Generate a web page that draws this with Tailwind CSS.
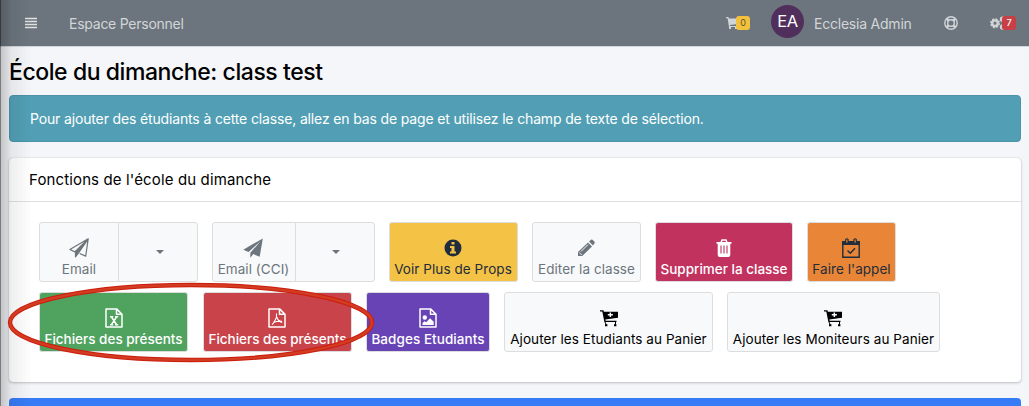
<!DOCTYPE html>
<html lang="fr">
<head>
<meta charset="utf-8">
<title>École du dimanche</title>
<script src="https://cdn.jsdelivr.net/npm/@tailwindcss/browser@4"></script>
</head>
<body class="relative w-[1029px] h-[406px] overflow-hidden bg-[#f4f6f9] font-['Inter','Liberation_Sans',sans-serif] text-black">
<svg class="hidden">
  <symbol id="cartplus" viewBox="0 0 20 18"><path fill="currentColor" d="M1 1.2h3.400l.5 1.500H19v6.100L6.300 10.600l.4 1.200H17.500v1.200H5.400L3.300 2.500H1zM6 15.200h2.400v2H6zM15 15.200h2.400v2H15zM5.500 13l1 2.200h1L6.500 13zM16 13h1v2.500h-1z"/><path fill="#f8f9fa" d="M10.600 3.600h1.500v1.500h1.800v1.300h-1.800v1.500h-1.500V6.400H8.800V5.100h1.800z"/></symbol>
  <symbol id="file" viewBox="0 0 18 20"><path fill="none" stroke="currentColor" stroke-width="1.500" stroke-linejoin="round" d="M1 .9h10.600L17 6.200v12.900H1zM11.500 1v5.300H17"/></symbol>
</svg>

<header class="flex items-center h-[47px] bg-[#6c757d] border-b border-[#d3d7dc] text-[#d2d5d8] text-[14px]">
  <svg class="ml-[25px] w-3 h-3" viewBox="0 0 12 12"><path stroke="#e0e2e4" stroke-width="1.700" d="M0 1.500h12M0 4.500h12M0 7.500h12M0 10.500h12"/></svg>
  <span class="ml-8 w-[116px] whitespace-nowrap tracking-[-0.250px]">Espace Personnel</span>
  <div class="ml-[541px] w-6 h-4 flex items-center">
    <svg class="w-3 h-3 shrink-0" viewBox="0 0 12 12"><path fill="currentColor" d="M0 0h2.400l.5 1.500H12V7L4 8v1h7v1H3L1.600 1.200H0zM3 10h2v2H3zM9 10h2v2H9z"/></svg>
    <span class="-ml-[2px] w-[14px] h-[14px] shrink-0 rounded-[3px] bg-[#f4c13d] text-[#5d5330] text-[9px] leading-[14px] text-center">0</span>
  </div>
  <span class="ml-[21px] -mt-1 w-[33px] h-[33px] rounded-full bg-[#502f5c] text-white text-[16.500px] leading-[33px] text-center tracking-[-0.500px]">EA</span>
  <span class="ml-[10px] w-[98px] whitespace-nowrap tracking-[-0.220px]">Ecclesia Admin</span>
  <svg class="ml-8 w-[14px] h-[14px]" viewBox="0 0 14 14" fill="none" stroke="currentColor"><circle cx="7" cy="7" r="6.200" stroke-width="1.400"/><circle cx="7" cy="7" r="3.300" stroke-width="1.400"/><path stroke-width="2.500" d="M2.700 2.700l1.900 1.900M11.300 2.700L9.400 4.600M2.700 11.300l1.900-1.900M11.300 11.300L9.400 9.400"/></svg>
  <div class="ml-8 w-[26px] flex items-center">
    <svg class="w-[14px] h-[14px] shrink-0" viewBox="0 0 14 14" fill="none" stroke="currentColor"><circle cx="5" cy="7.200" r="2.800" stroke-width="2.300"/><circle cx="5" cy="7.200" r="4.300" stroke-width="1.500" stroke-dasharray="1.900 1.477"/><circle cx="12.500" cy="3.200" r="1.700" stroke-width="2"/><circle cx="12.500" cy="11" r="1.700" stroke-width="2"/></svg>
    <span class="-ml-[2px] w-[14px] h-[14px] shrink-0 rounded-[3px] bg-[#c93f46] text-white text-[9px] font-medium leading-[14px] text-center">7</span>
  </div>
</header>

<main class="pl-[9px] pr-2">
  <h1 class="h-[48px] pt-2 text-[23px] leading-[34px] font-medium tracking-[-0.430px] whitespace-nowrap">École du dimanche: class test</h1>
  <div class="h-[47px] rounded-[4px] bg-[#529fb5] border border-[#4a93a8] pl-5 text-white text-[14px] leading-[46px] tracking-[-0.150px] whitespace-nowrap">Pour ajouter des étudiants à cette classe, allez en bas de page et utilisez le champ de texte de sélection.</div>

  <section class="mt-4 h-[224px] rounded-[4px] bg-white shadow-[0_0_1px_rgba(0,0,0,0.250),0_1px_3px_rgba(0,0,0,0.220)]">
    <h2 class="h-[44px] border-b border-[#dfdfdf] pl-5 text-[15px] leading-[44px] tracking-[0.130px] whitespace-nowrap">Fonctions de l'école du dimanche</h2>
    <div class="pl-[30px] pt-5 flex flex-col gap-[10px] text-[13.500px] leading-4 whitespace-nowrap">
      <div class="flex h-[60px] text-[#6c757d] tracking-[0.060px]">
        <div class="flex w-[159px] rounded-[3px] border border-[#dddddd] bg-[#f8f9fa]">
          <div class="w-[79px] border-r border-[#dddddd] flex flex-col items-center pt-[15px]">
            <svg class="w-5 h-5 mb-[3px]" viewBox="0 0 20 20"><path fill="none" stroke="currentColor" stroke-width="1.200" stroke-linejoin="round" d="M19.200.8L.9 11.500l5 2.400L19.200.8l-2.500 17.300-6-2.600M19.200.8L6.500 14v4.800l3-4z"/><path fill="currentColor" d="M18.500 2L6 14v5.400l3.500-4.500z"/></svg><span>Email</span>
          </div>
          <div class="flex-1 grid place-items-center"><svg class="w-2 h-1 ml-1" viewBox="0 0 8 4"><path fill="currentColor" d="M0 0h8L4 4z"/></svg></div>
        </div>
        <div class="ml-[14px] flex w-[163px] rounded-[3px] border border-[#dddddd] bg-[#f8f9fa]">
          <div class="w-[83px] border-r border-[#dddddd] flex flex-col items-center pt-[15px]">
            <svg class="w-5 h-5 mb-[3px] mr-0.5" viewBox="0 0 20 20"><path fill="currentColor" d="M19.800.4L.3 11.700l5.200 2.200L17.500 3.300 7.300 14.800v5l3-3.700 6.400 2.600z"/></svg><span class="mr-px">Email (CCI)</span>
          </div>
          <div class="flex-1 grid place-items-center"><svg class="w-2 h-1 ml-0.5" viewBox="0 0 8 4"><path fill="currentColor" d="M0 0h8L4 4z"/></svg></div>
        </div>
        <div class="ml-[14px] w-[129px] rounded-[3px] border border-[#dddddd] bg-[#f4c244] text-[#1f2d3d] flex flex-col items-center pt-4">
          <svg class="w-[18px] h-[18px] mb-1 mr-0.5" viewBox="0 0 18 18"><circle cx="9" cy="9" r="8.500" fill="currentColor"/><path fill="#f4c244" d="M7.500 3h3v2.500h-3zM6 7h4.500v5.500H12v2H6v-2h1.500V9H6z"/></svg><span class="mr-px">Voir Plus de Props</span>
        </div>
        <div class="ml-[14px] w-[109px] rounded-[3px] border border-[#dddddd] bg-[#f8f9fa] flex flex-col items-center pt-4">
          <svg class="w-[18px] h-[18px] mb-1 mr-0.5" viewBox="0 0 18 18"><path fill="currentColor" d="M11 3.500L15 7.500 5.200 17H1v-4zM12 2.500L14 .7q.8-.6 1.500 0l2 2q.6.8 0 1.500L16 6.500z"/><path stroke="#f8f9fa" fill="none" d="M4 12.500l7-7M2.200 13.500l2.500 2.500"/></svg><span>Editer la classe</span>
        </div>
        <div class="ml-[14px] w-[138px] rounded-[3px] border border-[#dddddd] bg-[#c1325f] text-white font-medium tracking-normal flex flex-col items-center pt-4">
          <svg class="w-[18px] h-[18px] mb-1" viewBox="0 0 18 18"><path fill="none" stroke="currentColor" stroke-width="1.500" d="M6 3.500L7 1h4l1 2.500"/><path fill="currentColor" d="M1.500 3h15v1.700h-1.200V16q-.2 2-1.800 2h-9q-1.600 0-1.800-2V4.700H1.500z"/><path stroke="#c1325f" stroke-width="1.100" d="M6 6.500v8M9 6.500v8M12 6.500v8"/></svg><span>Supprimer la classe</span>
        </div>
        <div class="ml-[14px] w-[89px] rounded-[3px] border border-[#dddddd] bg-[#e98536] text-[#1f2d3d] flex flex-col items-center pt-[15px]">
          <svg class="w-[18px] h-5 mb-[3px] mr-0.5" viewBox="0 0 18 20"><path fill="none" stroke="currentColor" stroke-width="1.400" d="M.8 4h16.400v15.200H.8zM5.500 12.500l2.800 2.700 4.700-5"/><path fill="currentColor" d="M.2 3h17.600v4H.2z"/><path fill="#e98536" stroke="currentColor" stroke-width="1.200" d="M3.700 1.500q1.200-1.500 2.400 0v3q-1.200 1.500-2.400 0zM11.900 1.500q1.200-1.500 2.400 0v3q-1.200 1.500-2.400 0z"/></svg><span>Faire l'appel</span>
        </div>
      </div>
      <div class="flex h-[60px] text-white font-medium">
        <div class="w-[149px] rounded-[3px] border border-[#dddddd] bg-[#4fa35f] flex flex-col items-center pt-[15px]">
          <div class="grid mb-[3px]"><svg class="w-[18px] h-5 [grid-area:1/1]"><use href="#file"/></svg><svg class="w-[18px] h-5 [grid-area:1/1]" viewBox="0 0 18 20"><path fill="none" stroke="currentColor" stroke-width="1.400" d="M6.500 9l5 7.500M11.500 9l-5 7.500M5 8.700h3.200M10 8.700h3.200M5 16.700h3.200M10 16.700h3.200"/></svg></div><span>Fichiers des présents</span>
        </div>
        <div class="ml-[15px] w-[149px] rounded-[3px] border border-[#dddddd] bg-[#c9434b] flex flex-col items-center pt-[15px]">
          <div class="grid mb-[3px] mr-0.5"><svg class="w-[18px] h-5 [grid-area:1/1]"><use href="#file"/></svg><svg class="w-[18px] h-5 [grid-area:1/1]" viewBox="0 0 18 20"><path fill="none" stroke="currentColor" stroke-width="1.100" d="M8.500 5.500v3q0 2-4.300 8.300M8.700 9q1.300 4 5.500 5.500M5.500 14.500q3-1.500 8.500-1.300"/></svg></div><span>Fichiers des présents</span>
        </div>
        <div class="ml-[14px] w-[124px] rounded-[3px] border border-[#dddddd] bg-[#6843b6] flex flex-col items-center pt-[15px]">
          <div class="grid mb-[3px]"><svg class="w-[18px] h-5 [grid-area:1/1]"><use href="#file"/></svg><svg class="w-[18px] h-5 [grid-area:1/1]" viewBox="0 0 18 20"><circle cx="5.800" cy="9.500" r="2.200" fill="currentColor"/><path fill="currentColor" d="M3.500 17v-2l2-1.800 1.800 1 3.700-4 3.700 3.500V17z"/></svg></div><span class="tracking-[0.060px]">Badges Etudiants</span>
        </div>
        <div class="ml-[14px] w-[209px] rounded-[3px] border border-[#dddddd] bg-[#f8f9fa] text-black font-normal tracking-[0.070px] flex flex-col items-center pt-4">
          <svg class="w-5 h-[18px] mb-1"><use href="#cartplus"/></svg><span>Ajouter les Etudiants au Panier</span>
        </div>
        <div class="ml-[14px] w-[213px] rounded-[3px] border border-[#dddddd] bg-[#f8f9fa] text-black font-normal tracking-[0.070px] flex flex-col items-center pt-4">
          <svg class="w-5 h-[18px] mb-1 mr-0.5"><use href="#cartplus"/></svg><span>Ajouter les Moniteurs au Panier</span>
        </div>
      </div>
    </div>
  </section>
  <div class="mt-4 h-5 rounded-t-[4px] bg-[#377bf6]"></div>
</main>

<div class="absolute left-0 top-0 w-8 h-full border-l border-black/50 bg-linear-to-r from-black/20 via-black/6 via-35% to-transparent"></div>
<svg class="absolute left-0 top-[270px] w-[400px] h-[100px]" viewBox="0 0 400 100"><ellipse cx="191" cy="52.500" rx="181" ry="37.500" fill="none" stroke="#cc1d0c" stroke-width="4.400"/><ellipse cx="191" cy="52.500" rx="181" ry="37.500" fill="none" stroke="#d23c22" stroke-width="2.400"/></svg>
</body>
</html>
